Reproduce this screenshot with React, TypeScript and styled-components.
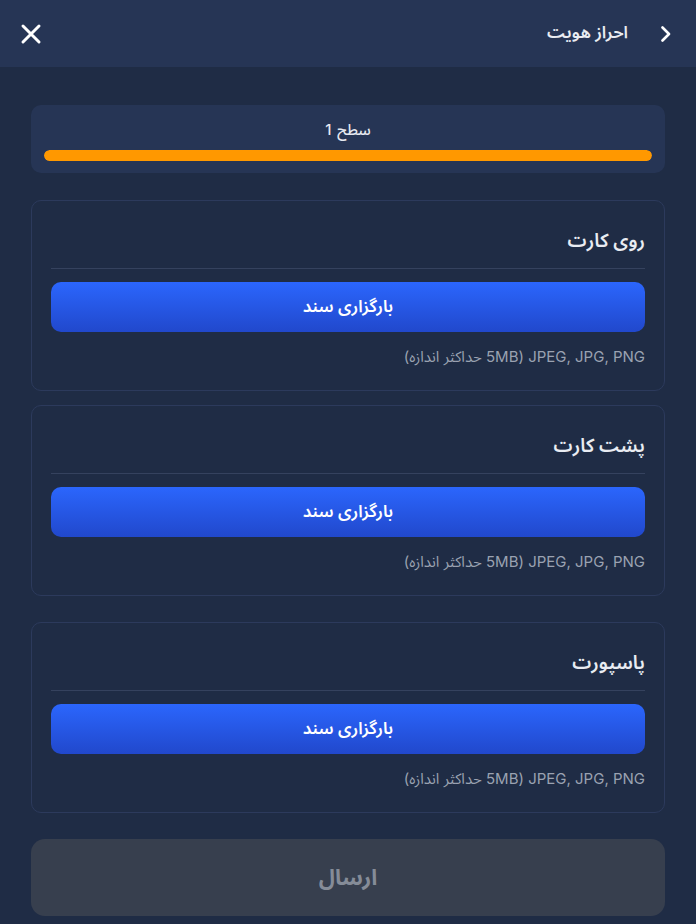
import React from 'react';
import styled, { createGlobalStyle } from 'styled-components';

const GlobalStyle = createGlobalStyle`
    html, body {
        margin: 0;
        padding: 0;
        background: #1f2c45;
    }
    body {
        font-family: "Inter", "Noto Sans Arabic", "DejaVu Sans", sans-serif;
    }
    * {
        box-sizing: border-box;
    }
`;

const documents = ['روی کارت', 'پشت کارت', 'پاسپورت'];

const App: React.FC = () => {
    return (
        <Page dir="rtl">
            <GlobalStyle />
            <Header>
                <HeaderStart>
                    <IconButton aria-label="back">
                        <svg width="12" height="16" viewBox="0 0 12 16" fill="none">
                            <path d="M2.5 1.5l6.5 6.5-6.5 6.5" stroke="#fff" strokeWidth="2.6" strokeLinecap="round" strokeLinejoin="round" />
                        </svg>
                    </IconButton>
                    <Title>احراز هویت</Title>
                </HeaderStart>
                <IconButton aria-label="close">
                    <svg width="22" height="22" viewBox="0 0 22 22" fill="none">
                        <path d="M3 3l16 16M19 3L3 19" stroke="#fff" strokeWidth="3" strokeLinecap="round" />
                    </svg>
                </IconButton>
            </Header>
            <Content>
                <LevelCard>
                    <LevelLabel>سطح 1</LevelLabel>
                    <Track>
                        <Fill style={{ width: '100%' }} />
                    </Track>
                </LevelCard>
                <Cards>
                    {documents.map((name, i) => (
                        <DocCard key={name} $gapAfter={i === 1 ? 26 : 14}>
                            <DocTitle>{name}</DocTitle>
                            <Divider />
                            <UploadButton>بارگزاری سند</UploadButton>
                            <Hint dir="ltr">
                                (<bdi>حداکثر اندازه</bdi> 5MB) JPEG, JPG, PNG
                            </Hint>
                        </DocCard>
                    ))}
                </Cards>
                <SubmitButton disabled>ارسال</SubmitButton>
            </Content>
        </Page>
    );
};

const Page = styled.div`
    min-height: 924px;
    background: #1f2c45;
    color: #e6e9f0;
`;

const Header = styled.div`
    height: 67px;
    background: #263555;
    display: flex;
    align-items: center;
    justify-content: space-between;
    padding: 0 24px 0 20px;
`;

const HeaderStart = styled.div`
    display: flex;
    align-items: center;
    gap: 32px;
`;

const IconButton = styled.button`
    background: none;
    border: none;
    padding: 0;
    display: flex;
    align-items: center;
    justify-content: center;
    cursor: pointer;
`;

const Title = styled.div`
    font-size: 17px;
    font-weight: 600;
    color: #e9ecf2;
    line-height: 24px;
    margin-bottom: 3px;
`;

const Content = styled.div`
    padding: 38px 31px 0 31px;
`;

const LevelCard = styled.div`
    background: #263555;
    border-radius: 10px;
    height: 68px;
    padding: 14px 13px 0 13px;
    display: flex;
    flex-direction: column;
    align-items: center;
`;

const LevelLabel = styled.div`
    font-size: 15px;
    font-weight: 500;
    line-height: 22px;
    color: #e6e9f0;
    word-spacing: 2px;
`;

const Track = styled.div`
    margin-top: 9px;
    width: 100%;
    height: 11px;
    border-radius: 6px;
    background: #3a4766;
    overflow: hidden;
`;

const Fill = styled.div`
    height: 100%;
    border-radius: 6px;
    background: #ff9800;
`;

const Cards = styled.div`
    margin-top: 27px;
    display: flex;
    flex-direction: column;
`;

const DocCard = styled.div<{ $gapAfter: number }>`
    border: 1px solid #2c3a5c;
    border-radius: 10px;
    padding: 26px 19px 22px 19px;
    margin-bottom: ${p => p.$gapAfter}px;
    display: flex;
    flex-direction: column;
`;

const DocTitle = styled.div`
    font-size: 19px;
    font-weight: 600;
    line-height: 28px;
    color: #e9ecf2;
`;

const Divider = styled.div`
    height: 1px;
    background: #35425e;
    margin: 13px 0 13px 0;
`;

const UploadButton = styled.button`
    height: 50px;
    border: none;
    border-radius: 10px;
    background: linear-gradient(180deg, #2b66fd 0%, #2148cc 100%);
    color: #fff;
    font-family: inherit;
    font-size: 17px;
    font-weight: 600;
    cursor: pointer;
`;

const Hint = styled.div`
    margin-top: 14px;
    font-size: 15px;
    line-height: 22px;
    color: #9aa2b1;
    text-align: right;
`;

const SubmitButton = styled.button`
    margin-top: 12px;
    width: 100%;
    height: 77px;
    border: none;
    border-radius: 14px;
    background: #373f4e;
    color: #858c98;
    font-family: inherit;
    font-size: 22px;
    font-weight: 700;
`;

export default App;
